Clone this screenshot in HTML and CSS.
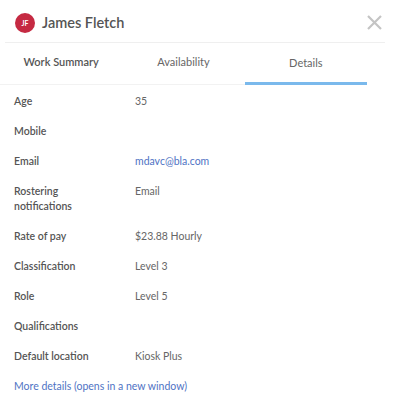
FILE: index.html
```html
<!DOCTYPE html>
<html lang="en">
<head>
  <meta charset="UTF-8" />
  <title>James Fletch</title>
  <link rel="stylesheet" href="styles.css">
</head>
<body>
  <div class="panel">
    <div class="panel-head">
      <span class="avatar">JF</span>
      <h1 class="name">James Fletch</h1>
      <button class="close" aria-label="Close">
        <svg width="15" height="15" viewBox="0 0 15 15">
          <path d="M1 1 L14 14 M14 1 L1 14" stroke="#c4c4c4" stroke-width="2.2" fill="none" />
        </svg>
      </button>
    </div>

    <div class="tabs">
      <div class="tab">Work Summary</div>
      <div class="tab">Availability</div>
      <div class="tab active">Details</div>
    </div>

    <dl class="details">
      <dt>Age</dt>
      <dd>35</dd>
      <dt>Mobile</dt>
      <dd></dd>
      <dt>Email</dt>
      <dd><a href="#">mdavc@bla.com</a></dd>
      <dt>Rostering notifications</dt>
      <dd>Email</dd>
      <dt>Rate of pay</dt>
      <dd>$23.88 Hourly</dd>
      <dt>Classification</dt>
      <dd>Level 3</dd>
      <dt>Role</dt>
      <dd>Level 5</dd>
      <dt>Qualifications</dt>
      <dd></dd>
      <dt>Default location</dt>
      <dd>Kiosk Plus</dd>
    </dl>

    <a class="more" href="#">More details (opens in a new window)</a>
  </div>
</body>
</html>
```

FILE: styles.css
```css
* {
  box-sizing: border-box;
}

body {
  margin: 0;
  font-family: Lato, "Open Sans", sans-serif;
  background: #fff;
  color: #555;
}

.panel {
  width: 410px;
}

.panel-head {
  display: flex;
  align-items: center;
  height: 43px;
  margin: 0 25px 0 5px;
  padding: 3px 3px 0 10px;
  border-bottom: 1px solid #efefef;
}

.avatar {
  width: 20px;
  height: 20px;
  border-radius: 50%;
  background: #c52a42;
  color: #fff;
  font-size: 7px;
  font-weight: 700;
  display: flex;
  align-items: center;
  justify-content: center;
}

.name {
  flex: 1;
  margin: 0 0 0 7px;
  font-size: 14.5px;
  font-weight: 600;
  color: #555;
}

.close {
  border: none;
  background: none;
  padding: 0;
  display: flex;
}

.tabs {
  display: grid;
  grid-template-columns: repeat(3, 1fr);
  width: 367px;
  height: 42px;
  border-bottom: 1px solid #f2f2f2;
}

.tab {
  display: flex;
  align-items: center;
  justify-content: center;
  font-size: 11px;
  color: #666;
  padding-bottom: 4px;
}

.tab:first-child {
  font-weight: 600;
  color: #555;
}

.tab.active {
  border-bottom: 3px solid #7ab9ec;
  margin-bottom: -1px;
  padding-bottom: 1px;
}

.details {
  display: grid;
  grid-template-columns: 121px 1fr;
  row-gap: 15px;
  margin: 0;
  padding: 9px 14px 0;
  font-size: 10.5px;
  line-height: 15px;
}

.details dt {
  font-weight: 600;
  color: #555;
  padding-right: 20px;
}

.details dd {
  margin: 0;
  color: #666;
}

.details a,
.more {
  color: #4f73c4;
  text-decoration: none;
}

.more {
  display: block;
  margin: 15px 14px 0;
  font-size: 10.5px;
  line-height: 15px;
}
```
